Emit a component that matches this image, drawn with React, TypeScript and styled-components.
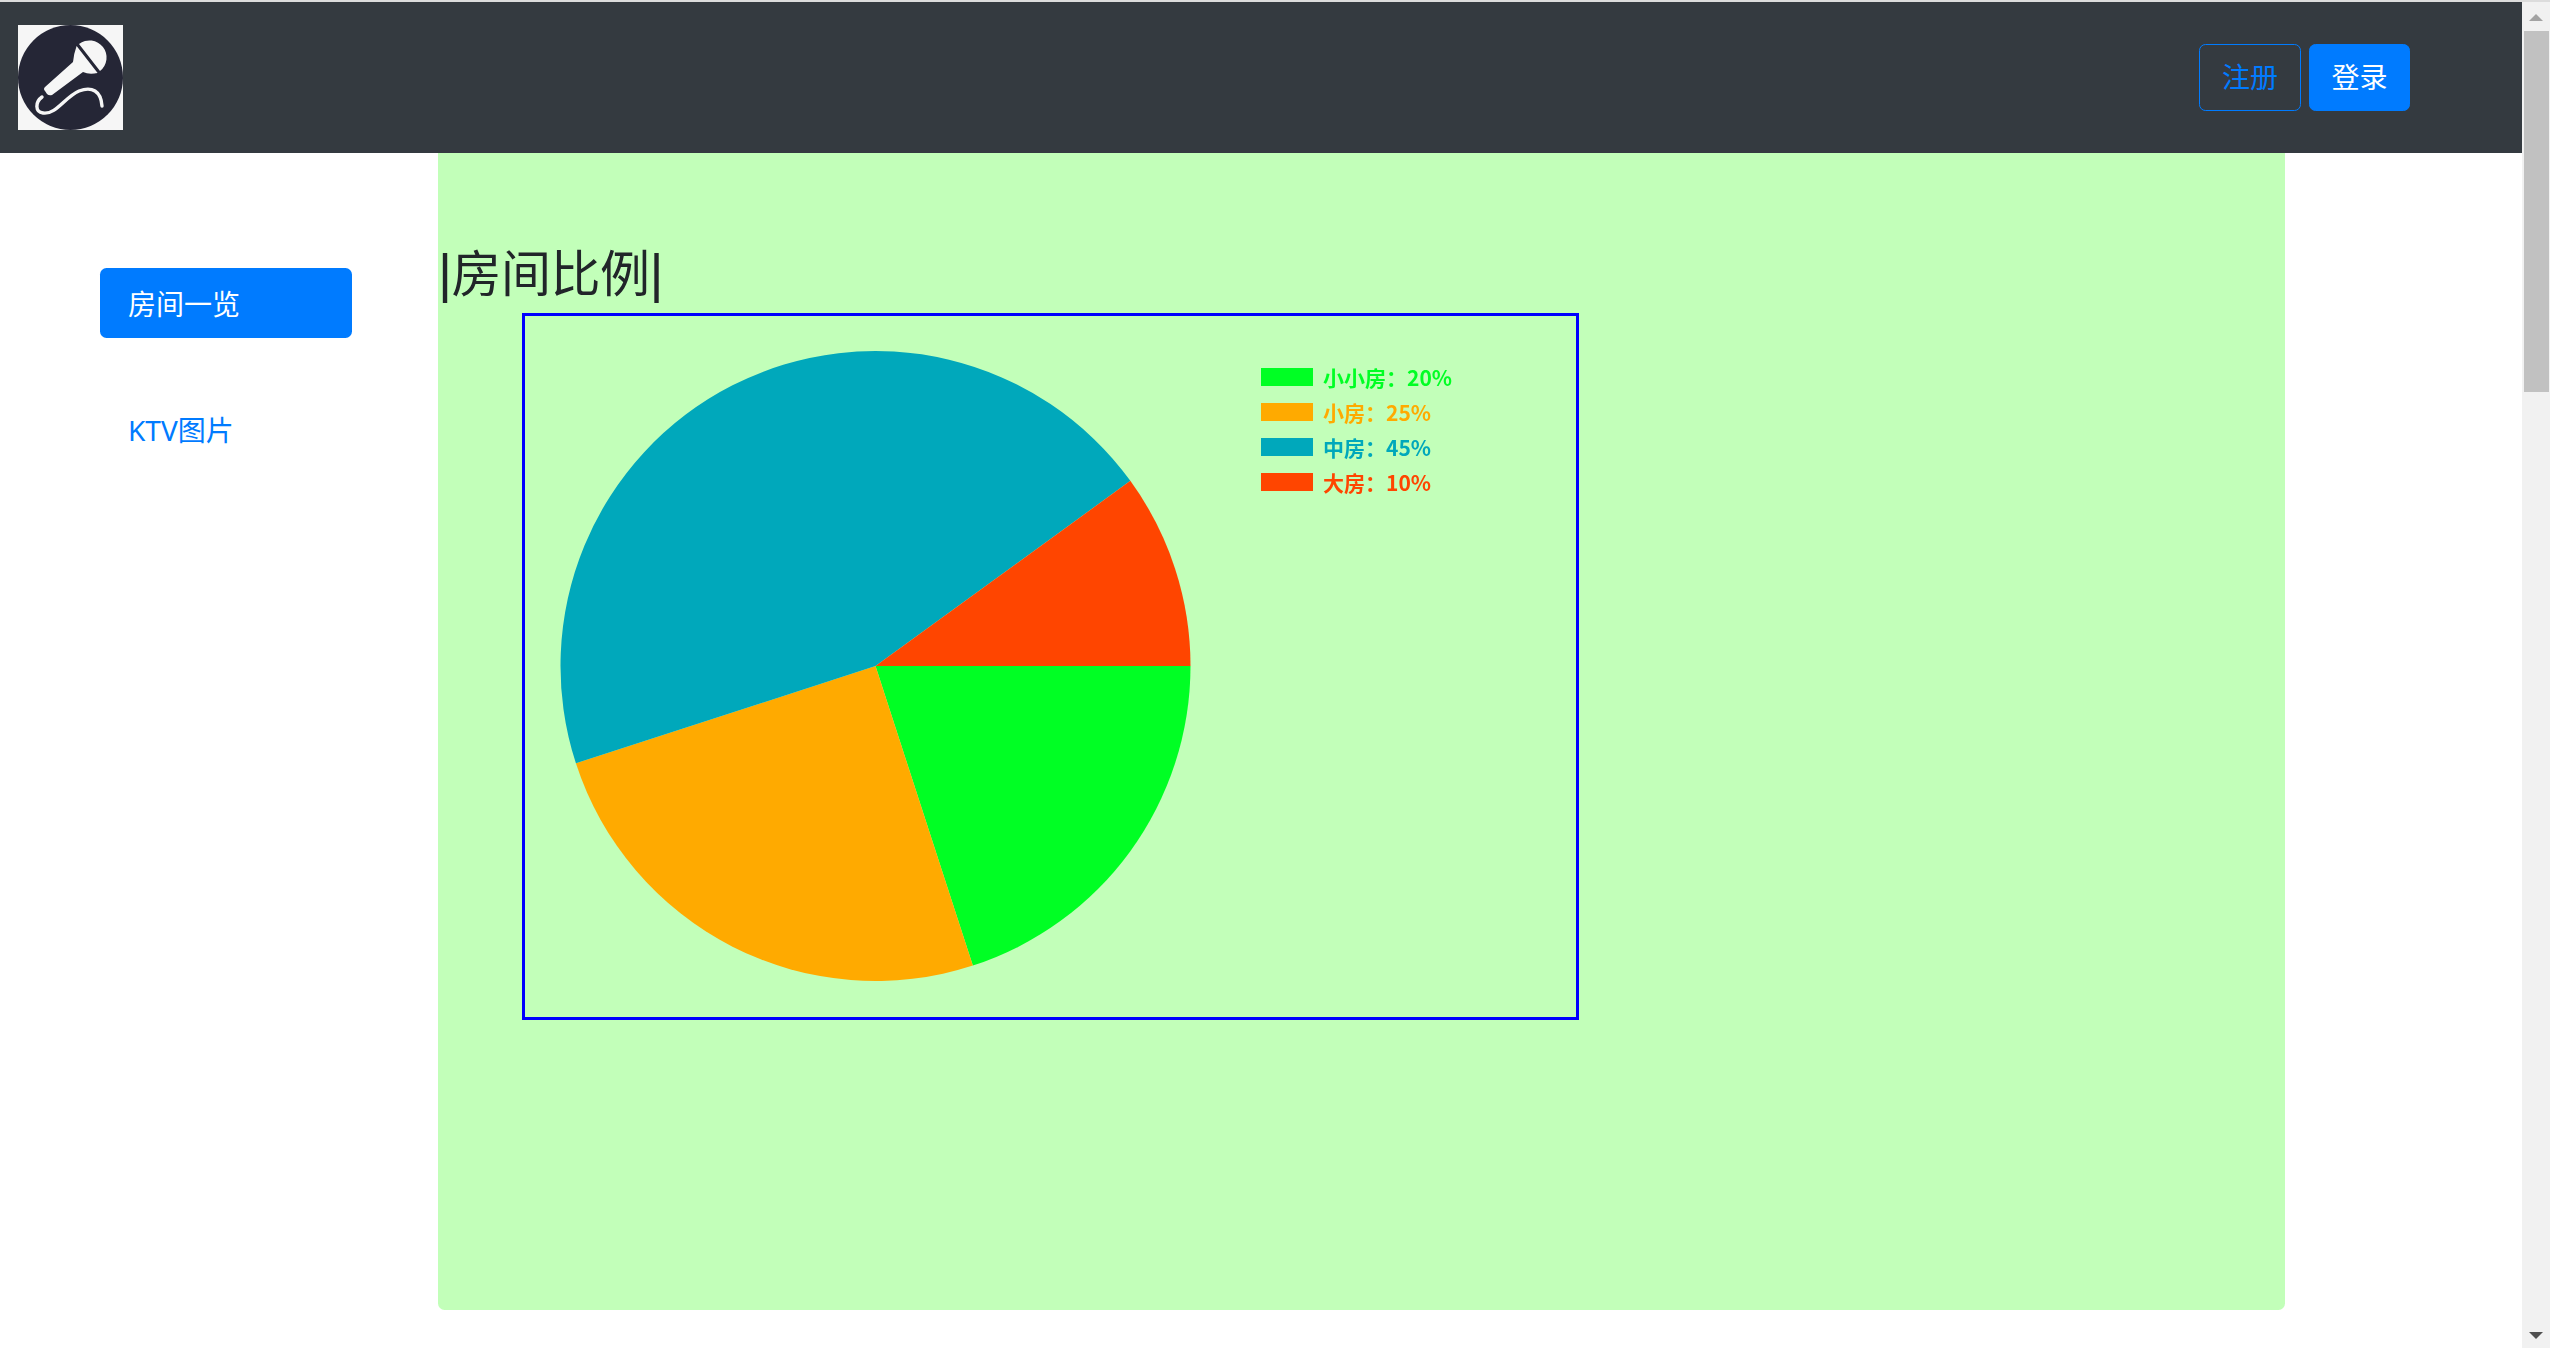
import React from "react";
import styled, { createGlobalStyle } from "styled-components";

const Global = createGlobalStyle`
  html, body { margin: 0; padding: 0; height: 100%; overflow: hidden; background: #fff; }
  body { font-family: "Noto Sans", "Noto Sans CJK SC", sans-serif; font-size: 26px; color: #212529; }
  * { box-sizing: border-box; }
`;

const TopEdge = styled.div`height: 2px; background: #dcdcdc;`;
const Shell = styled.div`display: flex; height: 1346px; overflow: hidden;`;
const Viewport = styled.div`flex: 1; min-width: 0; display: flex; flex-direction: column;`;

const Navbar = styled.header`
  height: 151px; flex: none; background: #343a40; display: flex; align-items: center;
  justify-content: space-between; padding: 0 112px 0 18px;
`;
const Logo = styled.svg`width: 105px; height: 105px; display: block;`;
const Actions = styled.div`display: flex; gap: 8px; margin-top: -1px;`;
const Button = styled.button<{ $solid?: boolean }>`
  width: ${p => (p.$solid ? "101px" : "102px")}; height: 67px; border-radius: 6.5px;
  border: 1.6px solid #007bff; padding: 0;
  font: inherit; font-size: 28px; line-height: 1; cursor: pointer;
  color: ${p => (p.$solid ? "#fff" : "#007bff")};
  background: ${p => (p.$solid ? "#007bff" : "transparent")};
`;

const Body = styled.div`flex: 1; display: flex; min-height: 0;`;
const Sidebar = styled.nav`
  width: 438px; flex: none; padding: 115px 86px 0 100px;
  display: flex; flex-direction: column; gap: 56px;
`;
const NavItem = styled.a<{ $active?: boolean }>`
  display: flex; align-items: center; height: 70px; padding-left: 28px; border-radius: 6.5px;
  font-size: 28px; color: ${p => (p.$active ? "#fff" : "#007bff")};
  background: ${p => (p.$active ? "#007bff" : "transparent")};
`;
const Panel = styled.main`
  width: 1847px; height: 1157px; flex: none; background: #c2ffb9;
  border-radius: 0 0 6.5px 6.5px; padding-top: 74px;
`;
const Heading = styled.h2`
  margin: 0; font-size: 50px; line-height: 86px; font-weight: 400; height: 86px; white-space: nowrap;
  letter-spacing: -0.5px; font-family: "Noto Sans CJK SC", sans-serif;
`;
const HeadingBar = styled.span`
  font-family: "Liberation Sans", sans-serif; font-size: 54px; font-weight: 400; letter-spacing: -0.5px;
`;
const ChartBox = styled.div`
  margin-left: 84px; width: 1057px; height: 707px; border: 3px solid #0000ff;
`;
const Chart = styled.svg`width: 1051px; height: 701px; display: block;`;
const LegendLabel = styled.text`
  font-family: "Noto Sans CJK SC", sans-serif; font-size: 21px; font-weight: 700; filter: blur(0.4px);
`;

const Scrollbar = styled.aside`
  width: 28px; flex: none; background: #f1f1f1; display: flex; flex-direction: column;
  align-items: center; justify-content: space-between;
`;
const ScrollTop = styled.div`display: flex; flex-direction: column; align-items: center; width: 100%;`;
const Arrow = styled.div<{ $down?: boolean }>`
  width: 0; height: 0; border-left: 7px solid transparent; border-right: 7px solid transparent;
  ${p => (p.$down
    ? "border-top: 7px solid #505050; margin-bottom: 9px;"
    : "border-bottom: 7px solid #a3a3a3; margin-top: 12px;")}
`;
const Thumb = styled.div`width: 25px; height: 361px; margin-top: 10px; background: #c1c1c1; margin-left: 1px;`;

const slices = [
  { name: "小小房", pct: 20, color: "#00ff24" },
  { name: "小房", pct: 25, color: "#ffaa00" },
  { name: "中房", pct: 45, color: "#00a8bb" },
  { name: "大房", pct: 10, color: "#ff4500" },
];

const CX = 350.5, CY = 350, R = 315;

function wedges() {
  let start = 0;
  return slices.map(s => {
    const end = start + (s.pct / 100) * Math.PI * 2;
    const large = end - start > Math.PI ? 1 : 0;
    const d = `M${CX} ${CY}L${CX + R * Math.cos(start)} ${CY + R * Math.sin(start)}A${R} ${R} 0 ${large} 1 ${CX + R * Math.cos(end)} ${CY + R * Math.sin(end)}Z`;
    start = end;
    return <path key={s.name} d={d} fill={s.color} />;
  });
}

export default function App() {
  return (
    <>
      <Global />
      <TopEdge />
      <Shell>
        <Viewport>
          <Navbar>
            <Logo viewBox="0 0 105 105">
              <rect width="105" height="105" fill="#f6f6f6" />
              <circle cx="52.5" cy="52.5" r="52.5" fill="#252636" />
              <path d="M61 19 A17 17 0 0 1 82 46 Z" fill="#f6f6f6" />
              <path d="M58.6 21 L79.6 48 Q71 50 65 47 L34 70 Q31 71 29 69 L27 66 Q25 64 27 62 L55 37 Q56 28 58.6 21 Z" fill="#f6f6f6" />
              <path d="M24 72 C17 77 17 87 25 88 C38 90 47 72 61 66 C74 61 83 66 84 81" fill="none" stroke="#f6f6f6" strokeWidth="3.4" strokeLinecap="round" />
            </Logo>
            <Actions>
              <Button>注册</Button>
              <Button $solid>登录</Button>
            </Actions>
          </Navbar>
          <Body>
            <Sidebar>
              <NavItem $active>房间一览</NavItem>
              <NavItem>KTV图片</NavItem>
            </Sidebar>
            <Panel>
              <Heading><HeadingBar>|</HeadingBar>房间比例<HeadingBar>|</HeadingBar></Heading>
              <ChartBox>
                <Chart viewBox="0 0 1051 701">
                  {wedges()}
                  {slices.map((s, i) => (
                    <g key={s.name}>
                      <rect x="736" y={52 + i * 35} width="52" height="18" fill={s.color} />
                      <LegendLabel x="798" y={70 + i * 35} fill={s.color}>{`${s.name}：${s.pct}%`}</LegendLabel>
                    </g>
                  ))}
                </Chart>
              </ChartBox>
            </Panel>
          </Body>
        </Viewport>
        <Scrollbar>
          <ScrollTop>
            <Arrow />
            <Thumb />
          </ScrollTop>
          <Arrow $down />
        </Scrollbar>
      </Shell>
    </>
  );
}
